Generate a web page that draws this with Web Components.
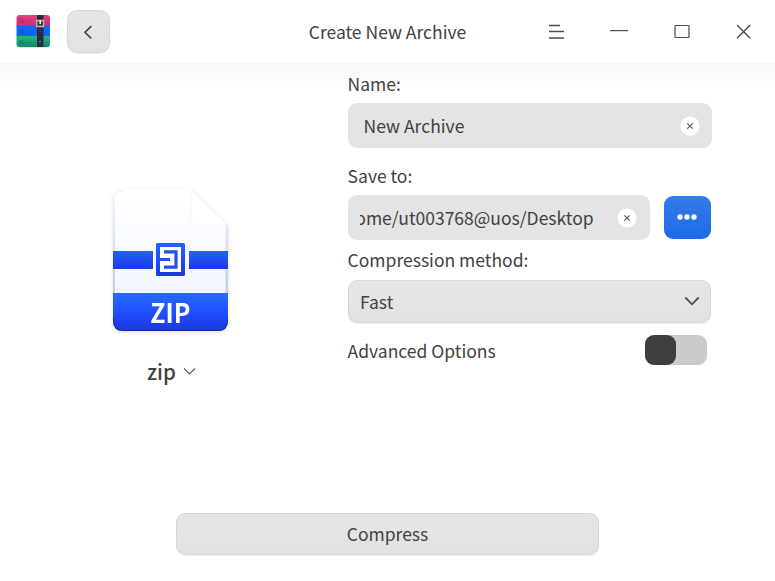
<!DOCTYPE html>
<html lang="en"><head><meta charset="utf-8"><title>Create New Archive</title>
<style>
html,body{margin:0;width:775px;height:581px;overflow:hidden;background:#fff}
body{font-family:"Noto Sans CJK SC","Noto Sans",sans-serif;font-size:17.5px;line-height:28px;color:#414141}
</style></head><body>
<archive-window></archive-window>
<script>
function define(name, html){
  const t=document.createElement('template');
  t.innerHTML=html;
  customElements.define(name,class extends HTMLElement{
    constructor(){super();this.attachShadow({mode:'open'}).append(t.content.cloneNode(true));}
  });
}
define('app-logo',`<style>:host{display:block;width:36px;height:36px}svg{display:block}</style>
<svg width="36" height="36" viewBox="0 0 36 36">
<defs><clipPath id="c"><rect x="1.500" y="1" width="33.500" height="32" rx="3"/></clipPath>
<linearGradient id="p" x2="0" y2="1"><stop stop-color="#e4448c"/><stop offset="1" stop-color="#cc2f70"/></linearGradient>
<linearGradient id="g" x2="0" y2="1"><stop stop-color="#2bb487"/><stop offset="1" stop-color="#078567"/></linearGradient></defs>
<rect x="2" y="3" width="32.500" height="31" rx="3" fill="#000" opacity=".12"/>
<g clip-path="url(#c)"><rect width="36" height="12" fill="url(#p)"/><rect y="11.500" width="36" height="11" fill="#0b66fa"/><rect y="22" width="36" height="12" fill="url(#g)"/>
<g fill="#000" opacity=".1"><rect x="4.500" y="4" width="5" height="5"/><rect x="4.500" y="15" width="5" height="5"/><rect x="4.500" y="26" width="5" height="5"/><path d="M11 6h4v1.500h-4zM11 17h4v1.500h-4zM11 28h4v1.500h-4z"/></g>
<rect x="22" width="6.500" height="34" fill="#2b2c33"/></g>
<path d="M21.700 6.500h6.800v6h-6.800z" fill="#3a3a40" stroke="#b9b9bd" stroke-width="1.300"/><path d="M25.200 6.500v3.500" stroke="#fff" stroke-width="1.500"/>
<circle cx="25" cy="17" r=".8" fill="#0b66fa"/><circle cx="25" cy="27.500" r=".8" fill="#2bb487"/></svg>`);
define('back-button',`<style>:host{display:flex;box-sizing:border-box;width:43px;height:43px;border:1px solid #d8d8d8;border-radius:10px;background:linear-gradient(#e6e6e6,#e2e2e2);align-items:center;justify-content:center;box-shadow:0 1px 1px #0000000d}</style>
<svg width="16" height="16" viewBox="0 0 16 16"><path d="M10.300 2.100 4 8.300 10.300 14.500" fill="none" stroke="#363636" stroke-width="1.500"/></svg>`);
define('window-controls',`<style>:host{display:flex;gap:38.400px;align-items:center}svg{display:block}</style>
<svg width="24" height="24" viewBox="0 0 24 24"><path d="M4 5.500H15M4 11.500H19M4 18H19" stroke="#4c4c4c" stroke-width="1.300"/></svg>
<svg width="24" height="24" viewBox="0 0 24 24"><path d="M3 10.600H21" stroke="#555" stroke-width="1.300"/></svg>
<svg width="24" height="24" viewBox="0 0 24 24"><rect x="5" y="5.500" width="14" height="12" rx=".5" fill="none" stroke="#4c4c4c" stroke-width="1.200"/></svg>
<svg width="24" height="24" viewBox="0 0 24 24"><path d="M5 5 18.200 18.200M18.200 5 5 18.200" stroke="#454545" stroke-width="1.300"/></svg>`);
define('title-bar',`<style>:host{display:grid;grid-template-columns:1fr 175px 1fr;height:63px;align-items:center;background:#fff}
.l{display:flex;padding-left:14.500px;gap:16.500px;align-items:center}app-logo{margin-top:1px}h1{margin:0;font-size:inherit;font-weight:400;text-align:center}window-controls{justify-self:end;padding-right:19px}</style>
<div class="l"><app-logo></app-logo><back-button></back-button></div><h1><slot></slot></h1><window-controls></window-controls>`);
define('zip-file',`<style>:host{display:grid;width:131px;height:158px}svg,b{grid-area:1/1}b{align-self:end;justify-self:center;font:700 26.500px/28px "Noto Sans CJK SC",sans-serif;color:#fff;padding-bottom:13px;z-index:1;transform:scaleX(.94)}</style>
<svg width="131" height="158" viewBox="105 181 131 158">
<defs><linearGradient id="w" x2="0" y2="1"><stop stop-color="#fff"/><stop offset="1" stop-color="#edf4ff"/></linearGradient>
<linearGradient id="b" x2="0" y2="1"><stop stop-color="#266bff"/><stop offset=".5" stop-color="#204fff"/><stop offset="1" stop-color="#1b36de"/></linearGradient>
<linearGradient id="m" x2="0" y2="1"><stop stop-color="#2462fc"/><stop offset="1" stop-color="#1d38e3"/></linearGradient>
<linearGradient id="e" gradientUnits="userSpaceOnUse" x1="0" y1="190" x2="0" y2="331"><stop stop-color="#f6f7f9"/><stop offset="1" stop-color="#b3bfd8"/></linearGradient>
<filter id="s" x="-10%" y="-10%" width="120%" height="120%"><feDropShadow dx="0" dy="1.500" stdDeviation="2" flood-opacity=".12"/></filter>
<clipPath id="d"><path d="M124 189.500H191L228 225V321Q228 331 218 331H123Q113 331 113 321V200Q113 189.500 124 189.500Z"/></clipPath></defs>
<path d="M124 189.500H191L228 225V321Q228 331 218 331H123Q113 331 113 321V200Q113 189.500 124 189.500Z" fill="#fff" filter="url(#s)"/>
<g clip-path="url(#d)"><rect x="113" y="189" width="115" height="142" fill="url(#w)"/><path d="M114 331V200Q114 190.500 124 190.500" fill="none" stroke="url(#e)" stroke-width="2"/><rect x="225.500" y="225" width="2.500" height="70" fill="url(#e)"/>
<rect x="113" y="251" width="40" height="18" fill="url(#m)"/><rect x="189" y="251" width="39" height="18" fill="url(#m)"/>
<rect x="113" y="293" width="115" height="38" fill="url(#b)"/><path d="M113.500 318V321Q113.500 330.500 123 330.500H218Q227.500 330.500 227.500 321V318" fill="none" stroke="#162aa8"/></g>
<path d="M191 190V217Q191 225 199 225H228Z" fill="#fff" stroke="#f2f3f6" stroke-width=".8"/>
<rect x="156" y="243" width="29" height="33" rx="1.500" fill="url(#m)"/>
<rect x="160" y="247" width="21" height="25" fill="#fff"/>
<path d="M164 251.800H176V267.200H164M159 259.500H170" fill="none" stroke="#2150f1" stroke-width="3.200"/>
</svg><b>ZIP</b>`);
define('format-picker',`<style>:host{display:flex;align-items:center;gap:6px;font-size:20.500px;font-weight:500}svg{margin-top:2px}</style><slot></slot>
<svg width="15" height="10" viewBox="0 0 15 10"><path d="M2 1.500 7.500 7 13 1.500" fill="none" stroke="#526070" stroke-width="1.200"/></svg>`);
define('field-label',`<style>:host{display:block;height:28px;white-space:nowrap}</style><slot></slot>`);
define('text-field',`<style>:host{display:flex;box-sizing:border-box;height:44.500px;border-radius:9px;background:#e4e4e4;align-items:center;padding:1px 12px 0 16px}.t{flex:1;min-width:0;overflow:hidden;white-space:nowrap}:host([end]){padding-left:12.500px;padding-right:13px}:host([end]) .t{display:flex;justify-content:flex-end;flex:0 0 233.500px;margin-right:auto}svg{display:block;flex:none}</style>
<div class="t"><slot></slot></div><svg width="20" height="20" viewBox="0 0 20 20"><circle cx="10" cy="10" r="9.500" fill="#fff"/><path d="M7.300 7.300 12.700 12.700M12.700 7.300 7.300 12.700" stroke="#4a586b" stroke-width="1.100"/></svg>`);
define('browse-button',`<style>:host{display:flex;width:47.500px;height:43px;border-radius:9px;background:linear-gradient(#347ce9,#1c6be6);align-items:center;justify-content:center}</style>
<svg width="20" height="8" viewBox="0 0 20 8"><g fill="#fff"><circle cx="3" cy="4" r="2.700"/><circle cx="10" cy="4" r="2.700"/><circle cx="17" cy="4" r="2.700"/></g></svg>`);
define('select-box',`<style>:host{display:flex;box-sizing:border-box;height:43px;border:1px solid #d7d7d7;border-radius:9px;background:linear-gradient(#e6e6e6,#e2e2e2);align-items:center;justify-content:space-between;padding:1px 9px 0 10.500px;box-shadow:0 1px 1px #0000000d}svg{margin-top:-2px}</style><slot></slot>
<svg width="18" height="14" viewBox="0 0 18 14"><path d="M2.300 3.500 9 10.300 15.700 3.500" fill="none" stroke="#505050" stroke-width="1.800"/></svg>`);
define('toggle-switch',`<style>:host{display:block;width:62.500px;height:30px;border-radius:9px;background:#cbcbcb}i{display:block;width:31.500px;height:30px;border-radius:9px;background:#3e3e3e}</style><i></i>`);
define('action-button',`<style>:host{display:flex;box-sizing:border-box;width:423px;height:42.500px;border:1px solid #d7d7d7;border-radius:9px;background:linear-gradient(#e6e6e6,#e2e2e2);align-items:center;justify-content:center;box-shadow:0 1px 1px #0000000d}</style><slot></slot>`);
define('archive-window',`<style>:host{display:flex;flex-direction:column;width:775px;height:581px;background:#fff}
main{display:grid;grid-template-columns:347.600px 364.700px;height:449.500px;background:linear-gradient(#f7f7f7,#fff 25px)}
.a{display:flex;flex-direction:column;align-items:center;padding:118px 6.600px 0 0}format-picker{margin-top:18px;margin-left:3px}
.f{padding-top:7px}text-field{margin-top:5px}.save{display:flex;gap:14px;align-items:center;margin-top:5.500px}.save text-field{margin:0;width:302px}
.n{margin-bottom:14px}.c{margin-top:6px}select-box{margin:6px 1.200px 0 .9px}.adv{display:flex;justify-content:space-between;align-items:center;margin-top:12px;padding-right:5px}
.adv field-label{padding-top:2px}footer{display:flex;padding-left:176px}</style>
<title-bar>Create New Archive</title-bar>
<main><section class="a"><zip-file></zip-file><format-picker>zip</format-picker></section>
<section class="f"><field-label>Name:</field-label><text-field class="n">New Archive</text-field>
<field-label>Save to:</field-label><div class="save"><text-field end><span>/home/ut003768@uos/Desktop</span></text-field><browse-button></browse-button></div>
<field-label class="c">Compression method:</field-label><select-box>Fast</select-box>
<div class="adv"><field-label>Advanced Options</field-label><toggle-switch></toggle-switch></div></section></main>
<footer><action-button>Compress</action-button></footer>`);
</script></body></html>
